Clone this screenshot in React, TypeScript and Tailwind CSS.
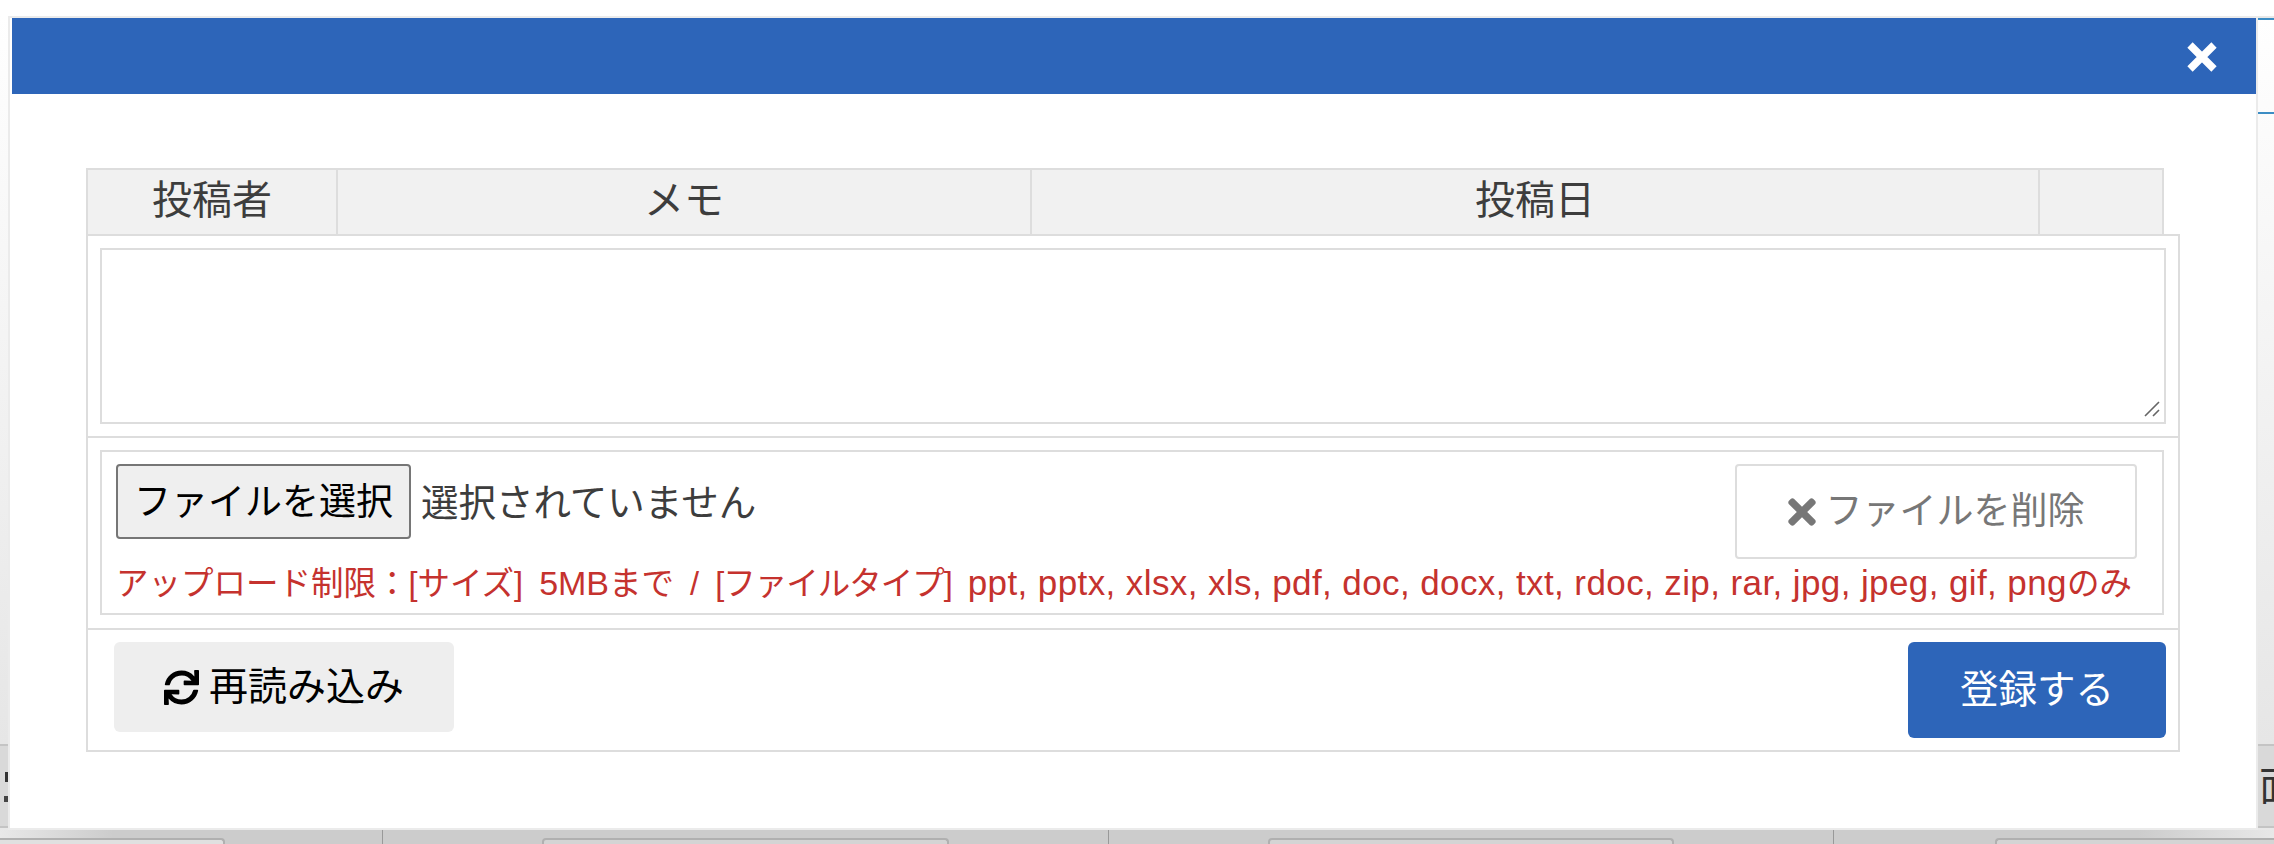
import { FaSync, FaTimes } from "react-icons/fa";

const font = { fontFamily: '"Liberation Sans", "Noto Sans CJK JP", sans-serif' };

function LeftStrip() {
  return (
    <div className="flex w-[8px] flex-col bg-[#e8e8e8] pb-[2px]">
      <div className="flex-1 bg-gradient-to-b from-white to-[#e6e6e6]" />
      <div className="flex h-[84px] flex-col items-end gap-[14px] border-y-2 border-[#c4c4c4] bg-[#d9d9d9] pt-[26px]">
        <div className="h-[10px] w-[3px] bg-[#333]" />
        <div className="h-[6px] w-[4px] bg-[#444]" />
      </div>
    </div>
  );
}

function RightStrip() {
  return (
    <div className="flex w-[16px] flex-col bg-[#e8e8e8] pb-[2px] pt-[2px]">
      <div className="flex-1 bg-gradient-to-b from-white to-[#e6e6e6]">
        <div className="h-[2px] bg-[#3c8dc4]" />
        <div className="mt-[92px] h-[2px] bg-[#3c8dc4]" />
      </div>
      <div className="flex h-[84px] items-center overflow-hidden border-y-2 border-[#c4c4c4] bg-[#d9d9d9] pl-[1px]">
        <span className="text-[40px] leading-[48px] text-[#333]">面</span>
      </div>
    </div>
  );
}

function BottomBar() {
  return (
    <div className="grid h-[14px] grid-cols-[383px_726px_725px_440px] bg-[linear-gradient(to_right,#e8e8e8,#cccccc_5%,#cccccc_94%,#e8e8e8)]">
      <div className="flex items-end border-r border-[#999]">
        <div className="h-[6px] w-[225px] rounded-tr-[4px] border-t-2 border-r-2 border-[#b0b0b0] bg-[#e0e0e0]" />
      </div>
      <div className="flex items-end justify-center border-r border-[#999]">
        <div className="h-[6px] w-[407px] rounded-t-[4px] border-x-2 border-t-2 border-[#b0b0b0] bg-[#d4d4d4]" />
      </div>
      <div className="flex items-end justify-center border-r border-[#999]">
        <div className="h-[6px] w-[406px] rounded-t-[4px] border-x-2 border-t-2 border-[#b0b0b0] bg-[#d4d4d4]" />
      </div>
      <div className="flex items-end justify-end">
        <div className="h-[6px] w-[279px] rounded-tl-[4px] border-l-2 border-t-2 border-[#b0b0b0] bg-[#d4d4d4]" />
      </div>
    </div>
  );
}

function TableHeader() {
  return (
    <div className="grid h-[66px] w-[2078px] grid-cols-[250px_694px_1008px_122px] border-2 border-b-0 border-[#dddddd] bg-[#f1f1f1] text-[40px] text-[#3d3d3d]">
      <div className="flex items-center justify-center border-r-2 border-[#dddddd] pb-[5px]">投稿者</div>
      <div className="flex items-center justify-center border-r-2 border-[#dddddd] pb-[5px]">メモ</div>
      <div className="flex items-center justify-center border-r-2 border-[#dddddd] pb-[5px]">投稿日</div>
      <div />
    </div>
  );
}

export default function App() {
  return (
    <div className="flex h-[844px] w-[2274px] flex-col overflow-hidden bg-white" style={font}>
      <div className="flex h-[830px] pt-[16px]">
        <LeftStrip />

        <div className="h-[814px] w-[2250px] border-2 border-[#ebebeb] bg-white">
          <div className="ml-[2px] flex h-[76px] items-center justify-end bg-[#2d65b9] pr-[38px]">
            <svg width="32" height="32" viewBox="0 0 32 32" className="mt-[1px]">
              <path d="M4 4 L28 28 M28 4 L4 28" stroke="#ffffff" strokeWidth="7.5" fill="none" />
            </svg>
          </div>

          <div className="pl-[76px] pt-[74px]">
            <TableHeader />

            <div className="w-[2094px] border-2 border-[#dddddd]">
              <div className="relative border-b-2 border-[#dddddd] p-[12px]">
                <textarea className="block h-[176px] w-full resize-none border-2 border-[#dddddd] bg-white" />
                <svg width="16" height="16" viewBox="0 0 16 16" className="absolute right-[18px] bottom-[19px]">
                  <path d="M1 15 L15 1 M9 15 L15 9" stroke="#666666" strokeWidth="1.6" fill="none" />
                </svg>
              </div>

              <div className="border-b-2 border-[#dddddd] px-[12px] pt-[12px] pb-[13px]">
                <div className="h-[165px] w-[2064px] border-2 border-[#dddddd] pl-[14px] pt-[12px] pr-[25px]">
                  <div className="flex items-start justify-between">
                    <div className="flex items-center gap-[10px]">
                      <button className="h-[75px] w-[295px] rounded-[4px] border-2 border-[#767676] bg-[#efefef] pt-[3px] text-[37px] whitespace-nowrap text-black">
                        ファイルを選択
                      </button>
                      <span className="pt-[3px] text-[37.5px] text-[#3d3d3d]">選択されていません</span>
                    </div>
                    <button className="flex h-[95px] w-[402px] items-center justify-center gap-[10px] rounded-[4px] border-2 border-[#dddddd] bg-white pt-[1px] text-[37px] text-[#777777]">
                      <FaTimes className="h-[40px] w-[28px]" />
                      ファイルを削除
                    </button>
                  </div>
                  <p className="mt-[4px] text-[32.5px] leading-[40px] [word-spacing:7px] whitespace-nowrap text-[#c5322e]">
                    アップロード制限：[サイズ] <span className="text-[34px]">5MB</span>まで /{" "}
                    <span className="tracking-[-1px]">[ファイルタイプ]</span>{" "}
                    <span className="text-[35px] tracking-[0.4px] [word-spacing:0px]">
                      ppt, pptx, xlsx, xls, pdf, doc, docx, txt, rdoc, zip, rar, jpg, jpeg, gif, png
                    </span>
                    のみ
                  </p>
                </div>
              </div>

              <div className="flex h-[120px] items-start justify-between pl-[26px] pr-[12px] pt-[12px]">
                <button className="flex h-[90px] w-[340px] items-center justify-center gap-[10px] rounded-[6px] bg-[#eeeeee] text-[39px] text-black">
                  <FaSync className="h-[35px] w-[35px]" />
                  再読み込み
                </button>
                <button className="h-[96px] w-[258px] rounded-[6px] bg-[#2d65b9] text-[38.5px] text-white">登録する</button>
              </div>
            </div>
          </div>
        </div>

        <RightStrip />
      </div>

      <BottomBar />
    </div>
  );
}
